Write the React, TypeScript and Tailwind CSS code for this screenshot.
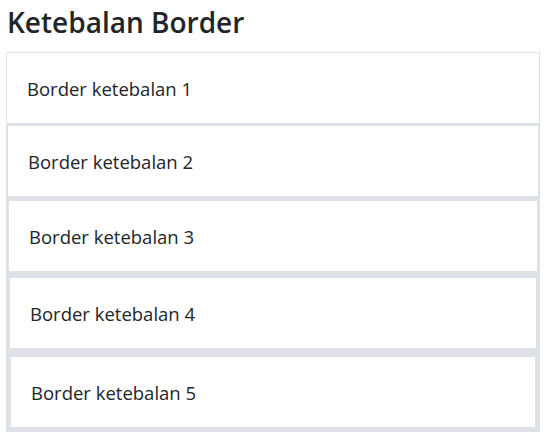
const sizes = [
  "border",
  "border-2",
  "border-[3px]",
  "border-4",
  "border-[5px]",
];

export default function App() {
  return (
    <div className="bg-white min-h-screen px-[6px] pt-[6px] text-[#212529] font-['Open_Sans',sans-serif]">
      <h3 className="text-[28px] leading-[1.2] font-semibold mb-[12px] pl-px">Ketebalan Border</h3>
      <div className="w-[534px]">
        {sizes.map((b, i) => (
          <div key={i} className={`${b} border-[#dee2e6] px-5 pt-[21px] pb-[19px] text-[18.5px] leading-[30px]`}>
            Border ketebalan {i + 1}
          </div>
        ))}
      </div>
    </div>
  );
}
